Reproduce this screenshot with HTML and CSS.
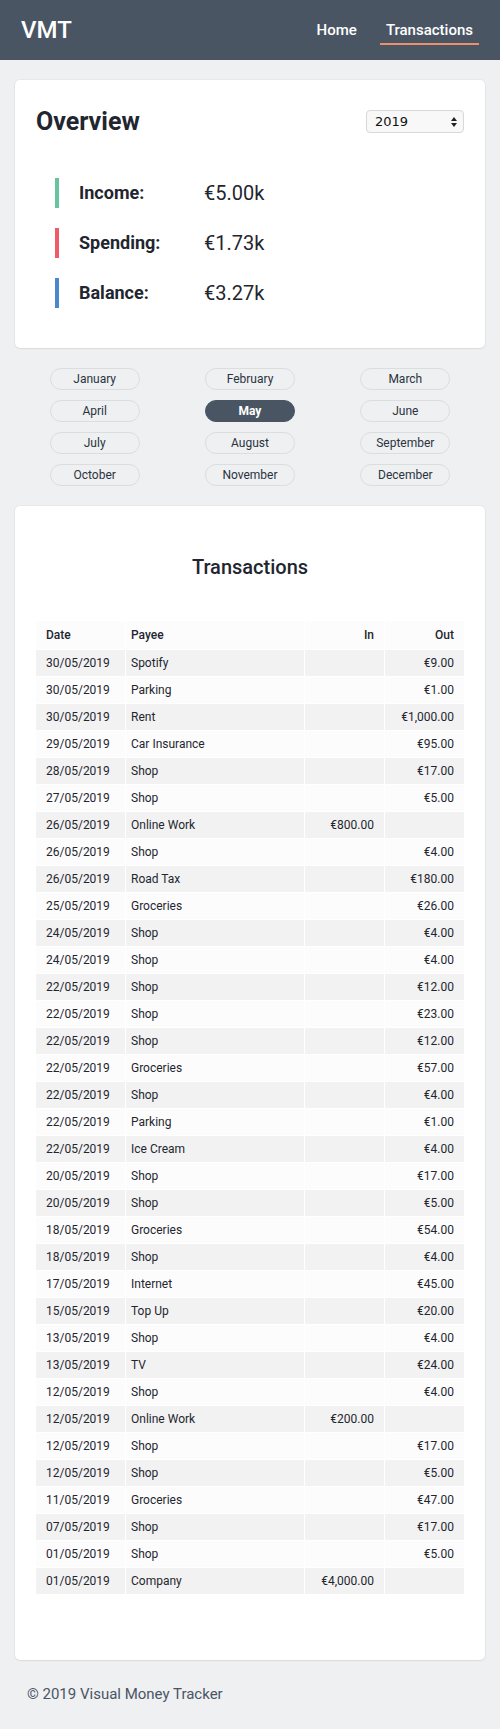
FILE: index.html
```html
<!DOCTYPE html>
<html lang="en">
<head>
<meta charset="utf-8">
<title>VMT</title>
<link rel="stylesheet" href="styles.css">
</head>
<body>
<header class="nav">
  <div class="logo">VMT</div>
  <nav class="links">
    <a class="link" href="#">Home</a>
    <a class="link active" href="#">Transactions</a>
  </nav>
</header>
<main class="main">
  <section class="card overview">
    <div class="overview-head">
      <h1 class="title">Overview</h1>
      <div class="select-wrap">
        <select class="year"><option>2019</option><option>2018</option></select>
        <svg class="select-arrows" width="8" height="12" viewBox="0 0 8 12"><path d="M4 1 L7 5 H1 Z M4 11 L7 7 H1 Z" fill="#222"/></svg>
      </div>
    </div>
    <ul class="stats">
      <li class="stat income"><span class="stat-label">Income:</span><span class="stat-value">€5.00k</span></li>
      <li class="stat spending"><span class="stat-label">Spending:</span><span class="stat-value">€1.73k</span></li>
      <li class="stat balance"><span class="stat-label">Balance:</span><span class="stat-value">€3.27k</span></li>
    </ul>
  </section>
  <div class="months">
    <button class="month">January</button>
    <button class="month">February</button>
    <button class="month">March</button>
    <button class="month">April</button>
    <button class="month selected">May</button>
    <button class="month">June</button>
    <button class="month">July</button>
    <button class="month">August</button>
    <button class="month">September</button>
    <button class="month">October</button>
    <button class="month">November</button>
    <button class="month">December</button>
  </div>
  <section class="card transactions">
    <h2 class="tx-title">Transactions</h2>
    <table class="tx">
      <colgroup><col class="c-date"><col class="c-payee"><col class="c-in"><col class="c-out"></colgroup>
      <thead><tr><th class="date">Date</th><th class="payee">Payee</th><th class="num">In</th><th class="num">Out</th></tr></thead>
      <tbody>
        <tr><td class="date">30/05/2019</td><td class="payee">Spotify</td><td class="num"></td><td class="num">€9.00</td></tr>
        <tr><td class="date">30/05/2019</td><td class="payee">Parking</td><td class="num"></td><td class="num">€1.00</td></tr>
        <tr><td class="date">30/05/2019</td><td class="payee">Rent</td><td class="num"></td><td class="num">€1,000.00</td></tr>
        <tr><td class="date">29/05/2019</td><td class="payee">Car Insurance</td><td class="num"></td><td class="num">€95.00</td></tr>
        <tr><td class="date">28/05/2019</td><td class="payee">Shop</td><td class="num"></td><td class="num">€17.00</td></tr>
        <tr><td class="date">27/05/2019</td><td class="payee">Shop</td><td class="num"></td><td class="num">€5.00</td></tr>
        <tr><td class="date">26/05/2019</td><td class="payee">Online Work</td><td class="num">€800.00</td><td class="num"></td></tr>
        <tr><td class="date">26/05/2019</td><td class="payee">Shop</td><td class="num"></td><td class="num">€4.00</td></tr>
        <tr><td class="date">26/05/2019</td><td class="payee">Road Tax</td><td class="num"></td><td class="num">€180.00</td></tr>
        <tr><td class="date">25/05/2019</td><td class="payee">Groceries</td><td class="num"></td><td class="num">€26.00</td></tr>
        <tr><td class="date">24/05/2019</td><td class="payee">Shop</td><td class="num"></td><td class="num">€4.00</td></tr>
        <tr><td class="date">24/05/2019</td><td class="payee">Shop</td><td class="num"></td><td class="num">€4.00</td></tr>
        <tr><td class="date">22/05/2019</td><td class="payee">Shop</td><td class="num"></td><td class="num">€12.00</td></tr>
        <tr><td class="date">22/05/2019</td><td class="payee">Shop</td><td class="num"></td><td class="num">€23.00</td></tr>
        <tr><td class="date">22/05/2019</td><td class="payee">Shop</td><td class="num"></td><td class="num">€12.00</td></tr>
        <tr><td class="date">22/05/2019</td><td class="payee">Groceries</td><td class="num"></td><td class="num">€57.00</td></tr>
        <tr><td class="date">22/05/2019</td><td class="payee">Shop</td><td class="num"></td><td class="num">€4.00</td></tr>
        <tr><td class="date">22/05/2019</td><td class="payee">Parking</td><td class="num"></td><td class="num">€1.00</td></tr>
        <tr><td class="date">22/05/2019</td><td class="payee">Ice Cream</td><td class="num"></td><td class="num">€4.00</td></tr>
        <tr><td class="date">20/05/2019</td><td class="payee">Shop</td><td class="num"></td><td class="num">€17.00</td></tr>
        <tr><td class="date">20/05/2019</td><td class="payee">Shop</td><td class="num"></td><td class="num">€5.00</td></tr>
        <tr><td class="date">18/05/2019</td><td class="payee">Groceries</td><td class="num"></td><td class="num">€54.00</td></tr>
        <tr><td class="date">18/05/2019</td><td class="payee">Shop</td><td class="num"></td><td class="num">€4.00</td></tr>
        <tr><td class="date">17/05/2019</td><td class="payee">Internet</td><td class="num"></td><td class="num">€45.00</td></tr>
        <tr><td class="date">15/05/2019</td><td class="payee">Top Up</td><td class="num"></td><td class="num">€20.00</td></tr>
        <tr><td class="date">13/05/2019</td><td class="payee">Shop</td><td class="num"></td><td class="num">€4.00</td></tr>
        <tr><td class="date">13/05/2019</td><td class="payee">TV</td><td class="num"></td><td class="num">€24.00</td></tr>
        <tr><td class="date">12/05/2019</td><td class="payee">Shop</td><td class="num"></td><td class="num">€4.00</td></tr>
        <tr><td class="date">12/05/2019</td><td class="payee">Online Work</td><td class="num">€200.00</td><td class="num"></td></tr>
        <tr><td class="date">12/05/2019</td><td class="payee">Shop</td><td class="num"></td><td class="num">€17.00</td></tr>
        <tr><td class="date">12/05/2019</td><td class="payee">Shop</td><td class="num"></td><td class="num">€5.00</td></tr>
        <tr><td class="date">11/05/2019</td><td class="payee">Groceries</td><td class="num"></td><td class="num">€47.00</td></tr>
        <tr><td class="date">07/05/2019</td><td class="payee">Shop</td><td class="num"></td><td class="num">€17.00</td></tr>
        <tr><td class="date">01/05/2019</td><td class="payee">Shop</td><td class="num"></td><td class="num">€5.00</td></tr>
        <tr><td class="date">01/05/2019</td><td class="payee">Company</td><td class="num">€4,000.00</td><td class="num"></td></tr>
      </tbody>
    </table>
  </section>
</main>
<footer class="footer">© 2019 Visual Money Tracker</footer>
</body>
</html>
```

FILE: styles.css
```css
* { box-sizing: border-box; }
html, body { margin: 0; padding: 0; }
body {
  background: #eff0f2;
  font-family: Roboto, "Liberation Sans", sans-serif;
  color: #1f2733;
}
.nav {
  height: 60px;
  background: #4a5564;
  display: flex;
  align-items: center;
  justify-content: space-between;
  padding: 0 21px;
}
.logo {
  color: #fff;
  font-size: 24px;
  font-weight: 500;
  line-height: 1;
}
.links { display: flex; gap: 17px; }
.link {
  color: #fff;
  text-decoration: none;
  font-size: 15px;
  font-weight: 500;
  line-height: 20px;
  padding: 4px 6px 3px;
  border-bottom: 2px solid transparent;
}
.link.active { border-bottom-color: #ee8f6c; }
.main { padding: 0 15px; }
.card {
  background: #fff;
  border-radius: 5px;
  box-shadow: 0 0 0 1px rgba(0,0,0,0.03), 0 1px 2px rgba(0,0,0,0.06);
}
.overview {
  margin-top: 20px;
  padding: 26px 21px 40px;
}
.overview-head {
  display: flex;
  align-items: center;
  justify-content: space-between;
}
.title {
  margin: 0;
  font-size: 25px;
  font-weight: 700;
  line-height: 32px;
  color: #1f2630;
}
.select-wrap { position: relative; margin-top: -1px; }
.year {
  appearance: none;
  -webkit-appearance: none;
  width: 98px;
  height: 23px;
  border: 1px solid #d8d8d8;
  border-radius: 4px;
  background: #f8f8f8;
  font-family: "DejaVu Sans", sans-serif;
  font-size: 13px;
  color: #111;
  padding: 0 0 0 8px;
  margin: 0;
}
.select-arrows {
  position: absolute;
  right: 6px;
  top: 6px;
  pointer-events: none;
}
.stats {
  list-style: none;
  margin: 40px 0 0;
  padding: 0 0 0 19px;
  display: flex;
  flex-direction: column;
  gap: 20px;
}
.stat {
  display: flex;
  align-items: center;
  height: 30px;
  border-left: 4px solid;
  padding-left: 20px;
}
.income { border-left-color: #66c4a0; }
.spending { border-left-color: #f15b69; }
.balance { border-left-color: #4a87cd; }
.stat-label {
  width: 125px;
  font-size: 18px;
  font-weight: 700;
  color: #1f2630;
  margin-top: -2px;
}
.stat-value {
  font-size: 20px;
  font-weight: 400;
  color: #1f2630;
}
.months {
  display: grid;
  grid-template-columns: repeat(3, 1fr);
  row-gap: 10px;
  padding: 0 2px;
  margin: 20px 0;
  justify-items: center;
}
.month {
  width: 90px;
  height: 22px;
  border: 1px solid #dcdddf;
  border-radius: 11px;
  background: transparent;
  font-family: Roboto, "Liberation Sans", sans-serif;
  font-size: 12px;
  color: #2a3340;
  padding: 0;
  line-height: 20px;
}
.month.selected {
  background: #4a5564;
  border-color: #4a5564;
  color: #fff;
  font-weight: 700;
}
.transactions {
  padding: 47px 21px 66px;
}
.tx-title {
  margin: 0 0 40px;
  text-align: center;
  font-size: 20px;
  font-weight: 500;
  line-height: 28px;
  color: #1f2630;
}
.tx {
  width: 100%;
  table-layout: fixed;
  border-collapse: separate;
  border-spacing: 0;
  font-size: 12px;
  color: #1f2630;
}
.c-date { width: 89px; }
.c-payee { width: 179px; }
.c-in { width: 80px; }
.c-out { width: 80px; }
.tx th, .tx td {
  padding: 0 10px;
  white-space: nowrap;
}
.tx th {
  height: 28px;
  font-weight: 500;
  text-align: left;
  background: #fcfcfc;
}
.tx td {
  height: 27px;
  border-top: 1px solid #fff;
}
.tx th + th, .tx td + td { border-left: 1px solid #fff; }
.tx .payee { padding-left: 5px; }
.tx .num { text-align: right; }
.tx tbody tr:nth-child(odd) td { background: #f2f2f2; }
.tx tbody tr:nth-child(even) td { background: #fcfcfc; }
.footer {
  padding: 24px 27px 26px;
  font-size: 15px;
  line-height: 20px;
  color: #4a5564;
}
```
